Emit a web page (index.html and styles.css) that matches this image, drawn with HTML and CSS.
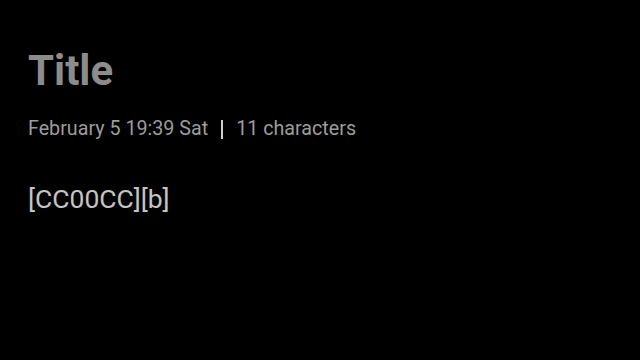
FILE: index.html
```html
<!DOCTYPE html>
<html lang="en">
<head>
  <meta charset="UTF-8" />
  <meta name="viewport" content="width=device-width, initial-scale=1.0" />
  <title>Note</title>
  <link rel="stylesheet" href="styles.css">
</head>
<body>
  <div class="note">
    <h1 class="note-title">Title</h1>
    <div class="note-meta">
      <span>February 5 19:39 Sat</span>
      <span class="divider"></span>
      <span>11 characters</span>
    </div>
    <div class="note-body">[CC00CC][b]</div>
  </div>
</body>
</html>
```

FILE: styles.css
```css
* {
  box-sizing: border-box;
}

body {
  margin: 0;
  padding: 0;
  width: 640px;
  height: 360px;
  background: #000;
  font-family: Roboto, 'Noto Sans', sans-serif;
  overflow: hidden;
}

.note {
  padding: 46px 28px 0;
}

.note-title {
  margin: 0;
  font-size: 42px;
  line-height: 50px;
  font-weight: bold;
  color: #8c8c8c;
}

.note-meta {
  display: flex;
  align-items: center;
  gap: 13px;
  margin-top: 21px;
  font-size: 19.7px;
  line-height: 24px;
  color: #9c9c9c;
}

.divider {
  width: 2px;
  height: 19px;
  background: #d0d0d0;
}

.note-body {
  margin-top: 42px;
  font-size: 26.5px;
  line-height: 32px;
  color: #c4c4c4;
}
```
